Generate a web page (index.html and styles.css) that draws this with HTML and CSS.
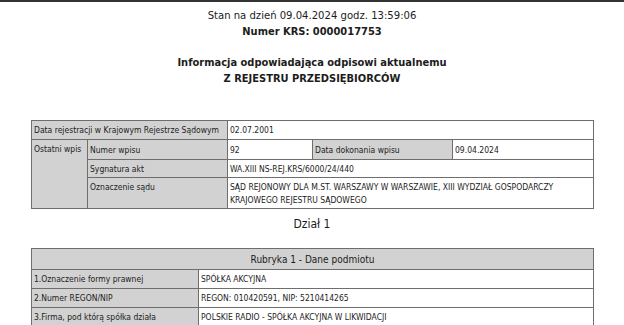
FILE: index.html
```html
<!DOCTYPE html>
<html lang="pl">
<head>
<meta charset="utf-8">
<link rel="stylesheet" href="styles.css">
</head>
<body>
<div class="topbar"></div>
<div class="head">
  <div class="line">Stan na dzień 09.04.2024 godz. 13:59:06</div>
  <div class="line bold">Numer KRS: 0000017753</div>
  <div class="line gap bold">Informacja odpowiadająca odpisowi aktualnemu</div>
  <div class="line bold">Z REJESTRU PRZEDSIĘBIORCÓW</div>
</div>
<table class="grid info">
  <colgroup>
    <col class="c1"><col class="c2"><col class="c3"><col class="c4"><col class="c5">
  </colgroup>
  <tr class="r1">
    <td class="lab" colspan="2">Data rejestracji w Krajowym Rejestrze Sądowym</td>
    <td colspan="3">02.07.2001</td>
  </tr>
  <tr class="r2">
    <td class="lab top" rowspan="3">Ostatni wpis</td>
    <td class="lab">Numer wpisu</td>
    <td>92</td>
    <td class="lab">Data dokonania wpisu</td>
    <td>09.04.2024</td>
  </tr>
  <tr class="r3">
    <td class="lab">Sygnatura akt</td>
    <td colspan="3">WA.XIII NS-REJ.KRS/6000/24/440</td>
  </tr>
  <tr class="r4">
    <td class="lab top">Oznaczenie sądu</td>
    <td colspan="3" class="top">SĄD REJONOWY DLA M.ST. WARSZAWY W WARSZAWIE, XIII WYDZIAŁ GOSPODARCZY KRAJOWEGO REJESTRU SĄDOWEGO</td>
  </tr>
</table>
<div class="dzial">Dział 1</div>
<table class="grid rub">
  <colgroup><col class="k1"><col class="k2"></colgroup>
  <tr class="rh"><td class="lab hd" colspan="2">Rubryka 1 - Dane podmiotu</td></tr>
  <tr class="rr"><td class="lab">1.Oznaczenie formy prawnej</td><td>SPÓŁKA AKCYJNA</td></tr>
  <tr class="rr"><td class="lab">2.Numer REGON/NIP</td><td>REGON: 010420591, NIP: 5210414265</td></tr>
  <tr class="rr"><td class="lab">3.Firma, pod którą spółka działa</td><td>POLSKIE RADIO - SPÓŁKA AKCYJNA W LIKWIDACJI</td></tr>
</table>
</body>
</html>
```
FILE: styles.css
```css
html, body {
  margin: 0;
  padding: 0;
  background: #ffffff;
  color: #1c1c1c;
  font-family: "DejaVu Sans Condensed", "DejaVu Sans", sans-serif;
}
.topbar {
  height: 2px;
  background: #333333;
}
.head {
  padding-top: 6px;
  text-align: center;
  font-size: 11.2px;
}
.head .line {
  line-height: 16px;
  height: 16px;
  white-space: nowrap;
}
.head .bold {
  font-weight: bold;
  font-size: 11px;
}
.head .gap {
  margin-top: 15px;
}
.grid {
  border-collapse: collapse;
  table-layout: fixed;
  margin: 0 0 0 31px;
  width: 563px;
  font-size: 8.5px;
}
.info {
  margin-top: 33px;
}
.grid td {
  border: 1px solid #6e6e6e;
  padding: 1px 2px 0;
  line-height: 13px;
  vertical-align: middle;
  background: #ffffff;
  overflow: hidden;
}
.grid td.lab {
  background: #d2d2d2;
}
.grid td.top {
  vertical-align: top;
  padding-top: 3px;
}
.c1 { width: 56px; }
.c2 { width: 140px; }
.c3 { width: 85px; }
.c4 { width: 140px; }
.c5 { width: 141px; }
.r1 { height: 19px; }
.r2 { height: 20px; }
.r3 { height: 18px; }
.r4 { height: 31px; }
.dzial {
  text-align: center;
  font-size: 12px;
  line-height: 16px;
  margin-top: 7px;
  margin-bottom: 16px;
}
.k1 { width: 167px; }
.k2 { width: 395px; }
.rh { height: 21px; }
.rr { height: 19px; }
.grid td.hd {
  text-align: center;
  font-size: 10px;
}
```
